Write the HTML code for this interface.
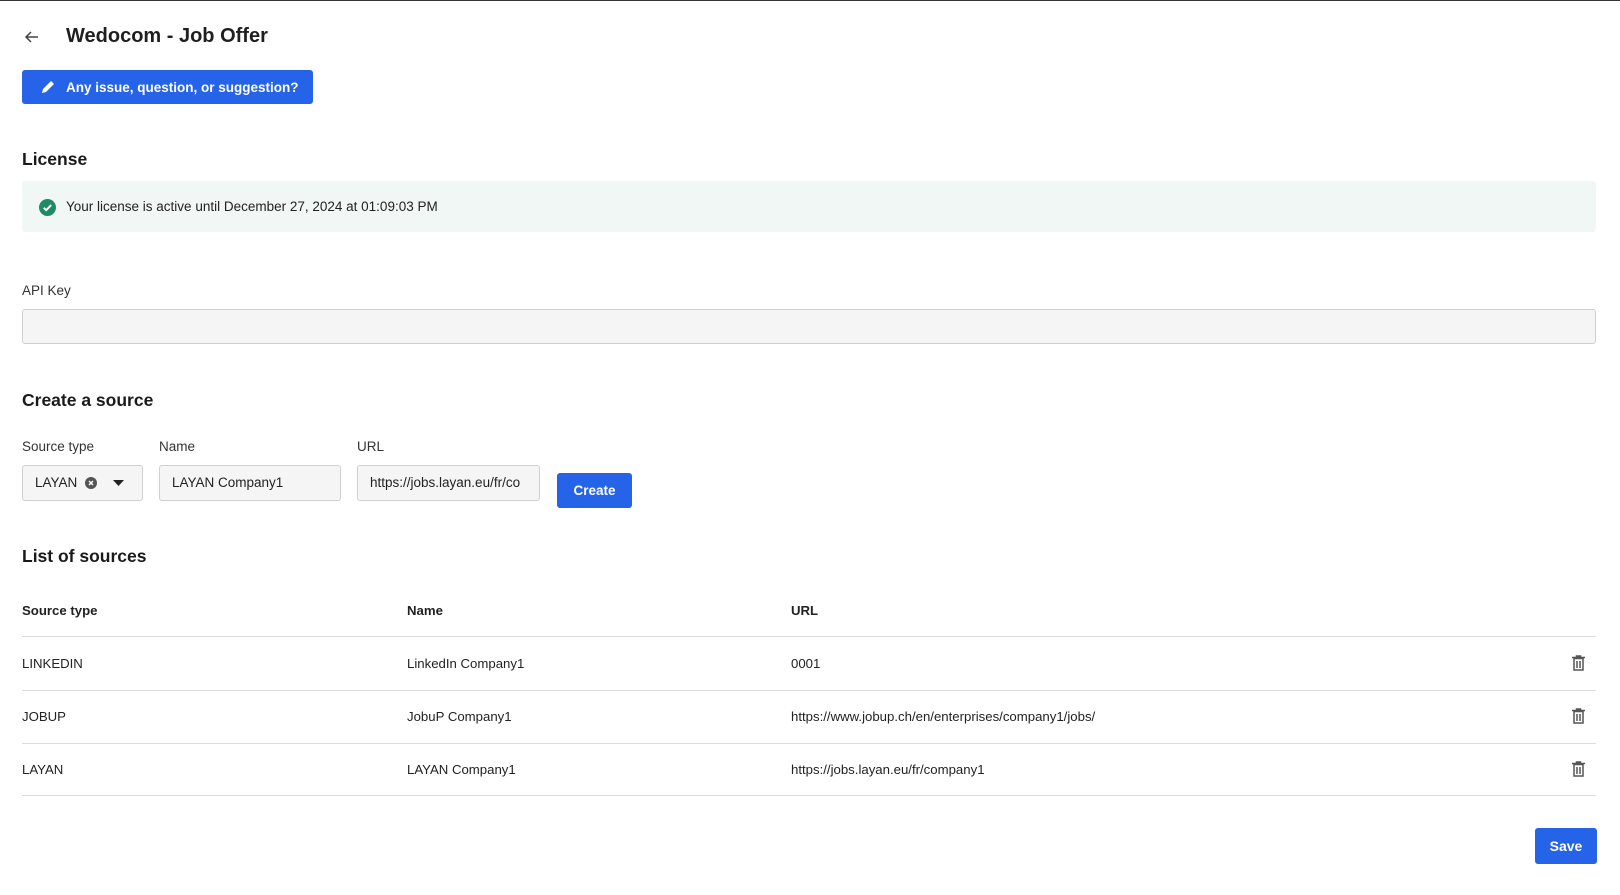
<!DOCTYPE html>
<html><head><meta charset="utf-8"><style>
*{box-sizing:border-box;margin:0;padding:0}
body{width:1620px;height:895px;background:#fff;font-family:"Liberation Sans",sans-serif;color:#1f1f1f;position:relative;overflow:hidden;border-top:1px solid #3a3336}
.a{position:absolute}
.h{font-weight:bold;font-size:17.5px;color:#1a1a1a}
.lbl{font-size:13.5px;color:#333}
.inp{position:absolute;background:#f5f5f5;border:1px solid #d0d0d0;border-radius:3px;font-size:13.5px;padding-left:12px;line-height:34px;height:36px;color:#222;overflow:hidden;white-space:nowrap}
.btn{position:absolute;background:#2563e8;color:#fff;font-weight:bold;border-radius:3px;font-size:13.5px;display:flex;align-items:center;justify-content:center}
.line{position:absolute;left:22px;width:1574px;height:1px;background:#dcdcdc}
.td{position:absolute;font-size:13.2px;color:#222}
</style></head><body>
<svg class="a" style="left:24px;top:28px" width="16" height="16" viewBox="0 0 16 16"><path d="M14 8H2M7 3L2 8l5 5" fill="none" stroke="#444" stroke-width="1.5"/></svg>
<div class="a" style="left:66px;top:24px;font-size:20px;font-weight:bold">Wedocom - Job Offer</div>
<div class="btn" style="left:22px;top:69px;width:291px;height:34px;justify-content:flex-start;padding-left:18px"><svg width="16" height="16" viewBox="0 0 16 16" style="margin-right:10px"><path d="M2 14l1-4 8-8 3 3-8 8z" fill="#fff"/></svg>Any issue, question, or suggestion?</div>
<div class="a h" style="left:22px;top:148px">License</div>
<div class="a" style="left:22px;top:180px;width:1574px;height:51px;background:#f1f7f5;border-radius:3px"></div>
<svg class="a" style="left:39px;top:198px" width="17" height="17" viewBox="0 0 16 16"><circle cx="8" cy="8" r="8" fill="#1e8a68"/><path d="M4.5 8.3l2.3 2.2 4.6-4.8" fill="none" stroke="#fff" stroke-width="1.8"/></svg>
<div class="a" style="left:66px;top:198px;font-size:13.5px;color:#222">Your license is active until December 27, 2024 at 01:09:03 PM</div>
<div class="a lbl" style="left:22px;top:282px">API Key</div>
<div class="inp" style="left:22px;top:308px;width:1574px;height:35px"></div>
<div class="a h" style="left:22px;top:389px">Create a source</div>
<div class="a lbl" style="left:22px;top:438px">Source type</div>
<div class="a lbl" style="left:159px;top:438px">Name</div>
<div class="a lbl" style="left:357px;top:438px">URL</div>
<div class="inp" style="left:22px;top:464px;width:121px">LAYAN</div>
<svg class="a" style="left:85px;top:476px" width="12" height="12" viewBox="0 0 12 12"><circle cx="6" cy="6" r="6" fill="#555"/><path d="M4 4l4 4M8 4l-4 4" stroke="#fff" stroke-width="1.4"/></svg>
<svg class="a" style="left:113px;top:479px" width="11" height="6" viewBox="0 0 11 6"><path d="M0 0h11L5.5 6z" fill="#222"/></svg>
<div class="inp" style="left:159px;top:464px;width:182px">LAYAN Company1</div>
<div class="inp" style="left:357px;top:464px;width:183px">https://jobs.layan.eu/fr/co</div>
<div class="btn" style="left:557px;top:472px;width:75px;height:35px">Create</div>
<div class="a h" style="left:22px;top:545px">List of sources</div>
<div class="td" style="left:22px;top:602px;font-weight:bold">Source type</div>
<div class="td" style="left:407px;top:602px;font-weight:bold">Name</div>
<div class="td" style="left:791px;top:602px;font-weight:bold">URL</div>
<div class="line" style="top:635px"></div>
<div class="td" style="left:22px;top:655px">LINKEDIN</div>
<div class="td" style="left:407px;top:655px">LinkedIn Company1</div>
<div class="td" style="left:791px;top:655px">0001</div>
<div class="line" style="top:689px"></div>
<div class="td" style="left:22px;top:708px">JOBUP</div>
<div class="td" style="left:407px;top:708px">JobuP Company1</div>
<div class="td" style="left:791px;top:708px">https://www.jobup.ch/en/enterprises/company1/jobs/</div>
<div class="line" style="top:742px"></div>
<div class="td" style="left:22px;top:761px">LAYAN</div>
<div class="td" style="left:407px;top:761px">LAYAN Company1</div>
<div class="td" style="left:791px;top:761px">https://jobs.layan.eu/fr/company1</div>
<div class="line" style="top:794px"></div>
<svg class="a" style="left:1572px;top:654px" width="13" height="16" viewBox="0 0 13 16"><path d="M0 2.5h13M4.5 2.5V1h4v1.5M2 3.5h9v11.5H2z M5 6v7M8 6v7" fill="none" stroke="#555" stroke-width="1.5"/></svg>
<svg class="a" style="left:1572px;top:707px" width="13" height="16" viewBox="0 0 13 16"><path d="M0 2.5h13M4.5 2.5V1h4v1.5M2 3.5h9v11.5H2z M5 6v7M8 6v7" fill="none" stroke="#555" stroke-width="1.5"/></svg>
<svg class="a" style="left:1572px;top:760px" width="13" height="16" viewBox="0 0 13 16"><path d="M0 2.5h13M4.5 2.5V1h4v1.5M2 3.5h9v11.5H2z M5 6v7M8 6v7" fill="none" stroke="#555" stroke-width="1.5"/></svg>
<div class="btn" style="left:1535px;top:827px;width:62px;height:36px;font-size:14px">Save</div>
</body></html>
